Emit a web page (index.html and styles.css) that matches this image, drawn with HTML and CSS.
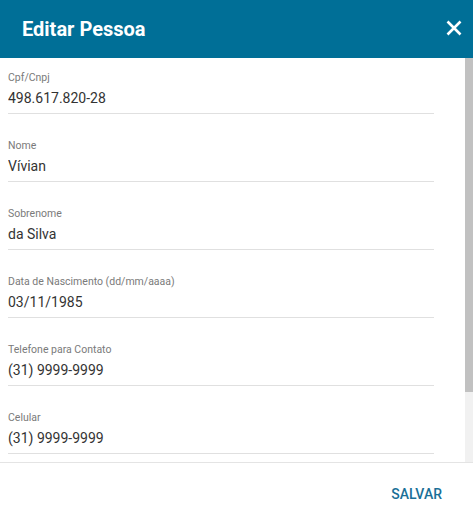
FILE: index.html
```html
<!DOCTYPE html>
<html lang="pt-BR">

<head>
    <meta charset="UTF-8">
    <meta name="viewport" content="width=device-width, initial-scale=1.0">
    <title>Editar Pessoa</title>
    <link rel="stylesheet" href="styles.css">
</head>

<body>
    <div class="dialog">
        <div class="dialog-header">
            <h2>Editar Pessoa</h2>
            <button class="close-btn" type="button" aria-label="Fechar">
                <svg width="24" height="24" viewBox="0 0 24 24">
                    <path d="M5.5 5.5L18.5 18.5M18.5 5.5L5.5 18.5" stroke="#fff" stroke-width="2.6" fill="none" />
                </svg>
            </button>
        </div>

        <div class="dialog-body">
            <form class="fields" id="personForm">
                <div class="field">
                    <label for="doc">Cpf/Cnpj</label>
                    <input type="text" id="doc" value="498.617.820-28">
                </div>
                <div class="field">
                    <label for="nome">Nome</label>
                    <input type="text" id="nome" value="Vívian">
                </div>
                <div class="field">
                    <label for="sobrenome">Sobrenome</label>
                    <input type="text" id="sobrenome" value="da Silva">
                </div>
                <div class="field">
                    <label for="nascimento">Data de Nascimento (dd/mm/aaaa)</label>
                    <input type="text" id="nascimento" value="03/11/1985">
                </div>
                <div class="field">
                    <label for="telefone">Telefone para Contato</label>
                    <input type="text" id="telefone" value="(31) 9999-9999">
                </div>
                <div class="field">
                    <label for="celular">Celular</label>
                    <input type="text" id="celular" value="(31) 9999-9999">
                </div>
            </form>
            <!-- scrollbar drawn by hand, headless browser hides the native one -->
            <div class="scrollbar">
                <div class="scrollbar-thumb"></div>
            </div>
        </div>

        <div class="dialog-footer">
            <button class="save-btn" type="submit" form="personForm">Salvar</button>
        </div>
    </div>
</body>

</html>
```

FILE: styles.css
```css
body {
    font-family: Roboto, "Liberation Sans", Arial, sans-serif;
    background-color: #fff;
    margin: 0;
    padding: 0;
}

.dialog {
    display: flex;
    flex-direction: column;
    height: 521px;
}

.dialog-header {
    height: 58px;
    flex-shrink: 0;
    display: flex;
    align-items: center;
    justify-content: space-between;
    padding: 0 4px 0 22px;
    background-color: #006f97;
}

.dialog-header h2 {
    margin: 0;
    color: #fff;
    font-size: 20px;
    font-weight: 700;
}

.close-btn {
    display: flex;
    padding: 3px;
    margin-top: -3px;
    background: none;
    border: none;
    cursor: pointer;
}

.dialog-body {
    flex: 1;
    display: flex;
    overflow: hidden;
}

.fields {
    flex: 1;
    margin: 0;
    padding: 13px 31px 0 8px;
}

.scrollbar {
    width: 8px;
    flex-shrink: 0;
    background-color: #f1f1f1;
}

.scrollbar-thumb {
    height: 334px;
    background-color: #c1c1c1;
}

.field {
    display: flex;
    flex-direction: column;
    margin-bottom: 25px;
}

.field label {
    font-size: 10.5px;
    line-height: 13px;
    color: #7a7a7a;
    margin-bottom: 4px;
}

.field input {
    font-family: inherit;
    font-size: 14px;
    line-height: 20px;
    height: 20px;
    color: #333;
    padding: 0 0 5px;
    border: none;
    border-bottom: 1px solid #e0e0e0;
    outline: none;
}

.dialog-footer {
    height: 58px;
    flex-shrink: 0;
    display: flex;
    align-items: center;
    justify-content: flex-end;
    padding-right: 23px;
    border-top: 1px solid #e4e4e4;
}

.save-btn {
    font-family: inherit;
    font-size: 14px;
    font-weight: 500;
    text-transform: uppercase;
    color: #1a6f97;
    background: none;
    border: none;
    padding: 8px;
    margin-top: 4px;
    cursor: pointer;
}
```
